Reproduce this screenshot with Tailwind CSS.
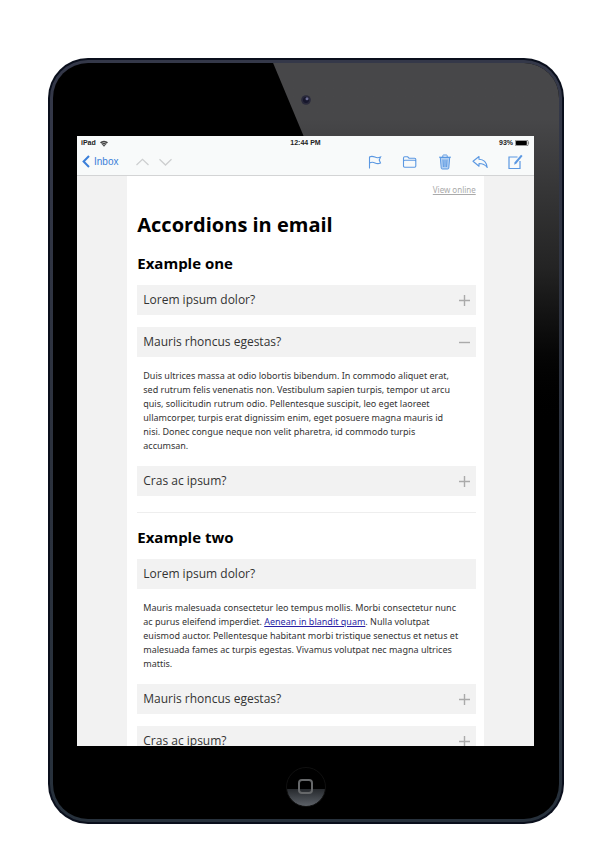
<!DOCTYPE html>
<html lang="en">
<head>
<meta charset="utf-8">
<meta name="viewport" content="width=device-width, initial-scale=1">
<title>Accordions in email</title>
<script src="https://cdn.jsdelivr.net/npm/@tailwindcss/browser@4"></script>
</head>
<body class="bg-white font-['Open_Sans',sans-serif] text-[#333]">
<main class="pl-[8%] pr-[6%] pt-[58px] pb-[30px]">
  <!-- Tablet shell -->
  <div class="rounded-[40px] bg-[#0a0f1c] p-[2px]">
  <div class="rounded-[38px] bg-linear-to-b from-[#343849] via-[#2c323e] to-[#27313c] p-[3px]">
  <div class="relative overflow-hidden rounded-[35px] bg-black pl-[24px] pr-[25px]">
    <!-- Glare across the bezel -->
    <div class="absolute inset-x-0 top-0 h-[370px] bg-linear-to-b from-[#474749] from-15% via-[#242424] via-55% to-black [clip-path:polygon(43.5%_0,100%_0,100%_100%,74%_100%)]"></div>

    <div class="relative flex h-[73px] items-center justify-center">
      <svg class="h-[12px] w-[12px]" viewBox="0 0 12 12" aria-hidden="true">
        <circle cx="6" cy="6" r="4.8" fill="#29293b"/>
        <circle cx="6" cy="6" r="3" fill="#17172c"/>
        <circle cx="7" cy="4.8" r="1.5" fill="#6c6d92"/>
      </svg>
    </div>

    <!-- Screen -->
    <div class="relative flex aspect-[457/610] flex-col overflow-hidden bg-[#f2f2f2]">
      <header class="border-b border-[#d3d4d5] bg-[#f8fafa] font-['Liberation_Sans',Arial,sans-serif]">
        <div class="grid h-[14px] grid-cols-3 items-center px-1 text-[7px] font-bold leading-[14px] text-[#222]">
          <span class="flex items-center gap-1">iPad
            <svg class="h-[7px] w-[8px]" viewBox="0 0 16 13" aria-hidden="true"><path d="M8 13 0 4.2a11.5 11.5 0 0 1 16 0z" fill="#444"/><path d="M2.4 6.8a8 8 0 0 1 11.2 0M5 9.7a4.4 4.4 0 0 1 6 0" fill="none" stroke="#f8fafa" stroke-width="1"/></svg>
          </span>
          <span class="text-center">12:44 PM</span>
          <span class="flex items-center justify-end gap-[2px]">93%
            <svg class="h-[6px] w-[15px]" viewBox="0 0 15 6" aria-hidden="true"><rect x=".3" y=".3" width="12.8" height="5.4" rx="1" fill="#fff" stroke="#333" stroke-width=".6"/><rect x="1" y="1" width="10.8" height="4" rx=".4" fill="#000"/><path d="M13.6 2q1.2 1 0 2z" fill="#333"/></svg>
          </span>
        </div>
        <nav class="flex h-[25px] items-center justify-between pb-[2px] pl-[5px] pr-[11px] text-[#5b98e2]">
          <div class="flex items-center">
            <a href="#" class="flex items-center gap-1 text-[10px] leading-[14px] text-[#3b7fd9]">
              <svg class="h-[13px] w-[8px]" viewBox="0 0 8 13" fill="none" stroke="currentColor" stroke-width="2" aria-hidden="true"><path d="M7 1 1.6 6.5 7 12"/></svg>Inbox
            </a>
            <button type="button" aria-label="Previous message" class="ml-[18px] text-[#cdcfd0]"><svg class="block h-[12px] w-[13px]" viewBox="0 0 13 12" fill="none" stroke="currentColor" stroke-width="1.3"><path d="M.5 9 6.5 3.3 12.5 9"/></svg></button>
            <button type="button" aria-label="Next message" class="ml-[10px] text-[#cdcfd0]"><svg class="block h-[12px] w-[13px]" viewBox="0 0 13 12" fill="none" stroke="currentColor" stroke-width="1.3"><path d="M.5 3.3 6.5 9 12.5 3.3"/></svg></button>
          </div>
          <div class="flex items-center gap-[19px]">
            <button type="button" aria-label="Flag"><svg class="block h-[16px] w-[16px]" viewBox="0 0 16 16" fill="none" stroke="currentColor" stroke-width="1.1"><path d="M2.5 14.5V3c2-1.2 3.5-.8 5.4.1s3.500.9 5.600 0L12.200 6l1.300 3c-2 .9-3.600.8-5.500-.1s-3.500-1-5.500.1"/></svg></button>
            <button type="button" aria-label="Move to folder"><svg class="block h-[16px] w-[16px]" viewBox="0 0 16 16" fill="none" stroke="currentColor" stroke-width="1.1"><path d="M1.500 12V4q0-1.200 1.200-1.200h3l1.300 1.400h5.600q1.200 0 1.200 1.200V12q0 1.200-1.200 1.200H2.700Q1.500 13.200 1.500 12zM1.500 7.500q0-1.200 1.200-1.200h9.900q1.200 0 1.200 1.200"/></svg></button>
            <button type="button" aria-label="Delete"><svg class="block h-[16px] w-[16px]" viewBox="0 0 16 16" fill="none" stroke="currentColor" stroke-width="1"><path d="M3.300 3.500 4.200 14q.1 1 1 1h5.600q.9 0 1-1l.9-10.500z" fill="#b4d1f2"/><path d="M2 3.200h12M5.800 3V1.700q0-.7.700-.7h3q.7 0 .7.700V3M6 5.500l.4 7.500M8 5.500V13M10 5.500 9.600 13"/></svg></button>
            <button type="button" aria-label="Reply"><svg class="block h-[16px] w-[16px]" viewBox="0 0 16 16" fill="none" stroke="currentColor" stroke-width="1.1" stroke-linejoin="round"><path d="M1 7.300 7 2.500v2.800c4.500.2 7.500 2.600 8.200 8.200C13.200 10.600 11 9.500 7 9.500v2.700z"/></svg></button>
            <button type="button" aria-label="Compose"><svg class="block h-[16px] w-[16px]" viewBox="0 0 16 16" fill="none" stroke="currentColor" stroke-width="1.2"><path d="M10.500 3H2v11.500h11V7"/><path d="M14.800 1.300 8 9.500" stroke-width="2"/><path d="m8 8.500-1.200 2.300L9 9.700z" fill="currentColor" stroke="none"/></svg></button>
          </div>
        </nav>
      </header>

      <!-- Email body -->
      <article class="mx-[11%] grow bg-white pl-[10px] pr-[8px] pt-[7px]">
        <p class="text-right font-['Noto_Sans',sans-serif] text-[8px] leading-[14px]"><a href="#" class="text-[#aaa] underline">View online</a></p>
        <h1 class="mt-[14px] text-[20px] font-bold leading-[28px] text-black">Accordions in email</h1>
        <section>
          <h2 class="mt-[14px] text-[15px] font-bold leading-[20px] text-black">Example one</h2>
          <h3 class="mt-3"><button type="button" aria-expanded="false" class="flex h-[30px] w-full items-center justify-between bg-[#f2f2f2] px-[6px] text-left text-[12px] leading-[16px]">Lorem ipsum dolor?<svg class="h-[11px] w-[11px]" viewBox="0 0 11 11" stroke="#aaa" stroke-width="1.4" aria-hidden="true"><path d="M0 5.500h11M5.500 0v11"/></svg></button></h3>
          <h3 class="mt-3"><button type="button" aria-expanded="true" class="flex h-[30px] w-full items-center justify-between bg-[#f2f2f2] px-[6px] text-left text-[12px] leading-[16px]">Mauris rhoncus egestas?<svg class="h-[11px] w-[11px]" viewBox="0 0 11 11" stroke="#aaa" stroke-width="1.4" aria-hidden="true"><path d="M0 5.500h11"/></svg></button></h3>
          <p class="mt-3 whitespace-nowrap pb-px pl-[6px] font-['Noto_Sans',sans-serif] text-[9px] leading-[14px]">Duis ultrices massa at odio lobortis bibendum. In commodo aliquet erat,<br>sed rutrum felis venenatis non. Vestibulum sapien turpis, tempor ut arcu<br>quis, sollicitudin rutrum odio. Pellentesque suscipit, leo eget laoreet<br>ullamcorper, turpis erat dignissim enim, eget posuere magna mauris id<br>nisi. Donec congue neque non velit pharetra, id commodo turpis<br>accumsan.</p>
          <h3 class="mt-3"><button type="button" aria-expanded="false" class="flex h-[30px] w-full items-center justify-between bg-[#f2f2f2] px-[6px] text-left text-[12px] leading-[16px]">Cras ac ipsum?<svg class="h-[11px] w-[11px]" viewBox="0 0 11 11" stroke="#aaa" stroke-width="1.4" aria-hidden="true"><path d="M0 5.500h11M5.500 0v11"/></svg></button></h3>
        </section>
        <hr class="mt-4 border-[#eee]">
        <section>
          <h2 class="mt-[14px] text-[15px] font-bold leading-[20px] text-black">Example two</h2>
          <h3 class="mt-3"><button type="button" aria-expanded="true" class="flex h-[30px] w-full items-center justify-between bg-[#f2f2f2] px-[6px] text-left text-[12px] leading-[16px]">Lorem ipsum dolor?</button></h3>
          <p class="mt-3 whitespace-nowrap pb-px pl-[6px] font-['Noto_Sans',sans-serif] text-[9px] leading-[14px]">Mauris malesuada consectetur leo tempus mollis. Morbi consectetur nunc<br>ac purus eleifend imperdiet. <a href="#" class="text-[#2a1fa5] underline">Aenean in blandit quam</a>. Nulla volutpat<br>euismod auctor. Pellentesque habitant morbi tristique senectus et netus et<br>malesuada fames ac turpis egestas. Vivamus volutpat nec magna ultrices<br>mattis.</p>
          <h3 class="mt-3"><button type="button" aria-expanded="false" class="flex h-[30px] w-full items-center justify-between bg-[#f2f2f2] px-[6px] text-left text-[12px] leading-[16px]">Mauris rhoncus egestas?<svg class="h-[11px] w-[11px]" viewBox="0 0 11 11" stroke="#aaa" stroke-width="1.4" aria-hidden="true"><path d="M0 5.500h11M5.500 0v11"/></svg></button></h3>
          <h3 class="mt-3"><button type="button" aria-expanded="false" class="flex h-[30px] w-full items-center justify-between bg-[#f2f2f2] px-[6px] text-left text-[12px] leading-[16px]">Cras ac ipsum?<svg class="h-[11px] w-[11px]" viewBox="0 0 11 11" stroke="#aaa" stroke-width="1.4" aria-hidden="true"><path d="M0 5.500h11M5.500 0v11"/></svg></button></h3>
        </section>
      </article>
    </div>

    <div class="flex h-[73px] items-center justify-center pt-[8px]">
      <button type="button" aria-label="Home" class="flex h-[40px] w-[40px] items-center justify-center rounded-full border border-[#101010] bg-linear-to-b from-black from-55% via-[#26292d] via-55% to-[#5d6268]">
        <span class="h-[15px] w-[15px] rounded-[4px] border-2 border-[#66686a]"></span>
      </button>
    </div>
  </div>
  </div>
  </div>
</main>
</body>
</html>
